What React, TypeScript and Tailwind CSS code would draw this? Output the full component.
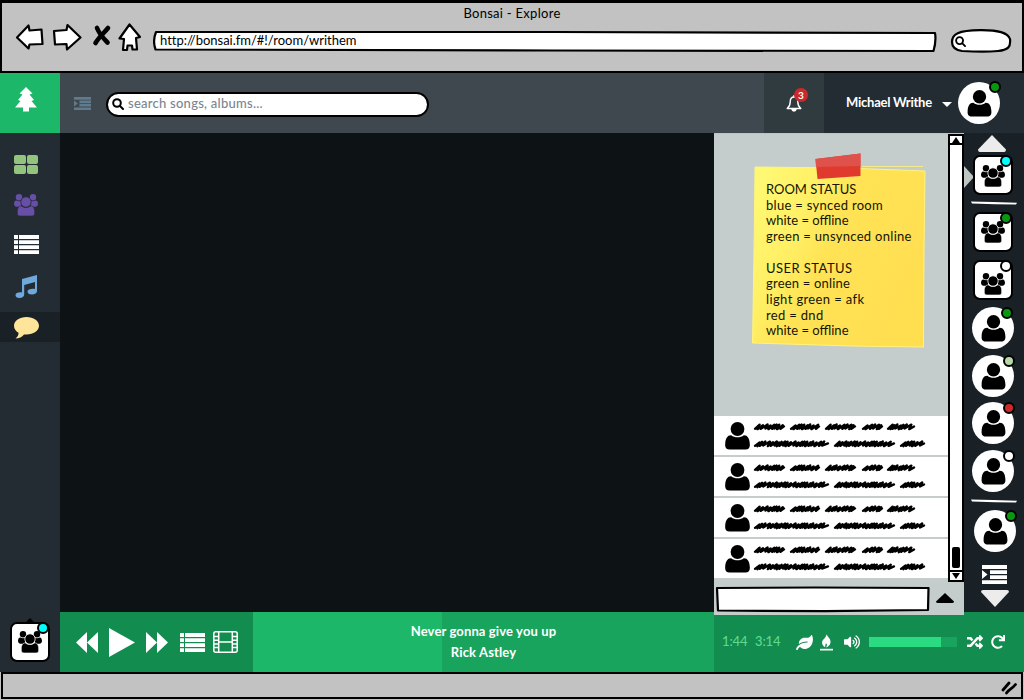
import React from "react";
import { FaLeaf, FaRandom, FaRedo, FaVolumeUp } from "react-icons/fa";

const font = "font-['Lato','Open_Sans',sans-serif]";

function GroupIcon({ className, gap }: { className: string; gap: string }) {
  return (
    <svg viewBox="0 0 24 22" className={`shrink-0 ${className}`} fill="currentColor">
      <circle cx="5" cy="3.2" r="3.2" />
      <circle cx="19" cy="3.2" r="3.2" />
      <path d="M0 10C0 7.800 1 6.200 2.500 6.500 4 7.400 6 7.400 7.500 6.500L7 12.500C3 13.400 0 12.700 0 10ZM24 10C24 7.800 23 6.200 21.500 6.500 20 7.400 18 7.400 16.500 6.500L17 12.500C21 13.400 24 12.700 24 10Z" />
      <path
        d="M3.300 18C3.300 14 5 11.500 7.500 12 10 14 14 14 16.500 12 19 11.500 20.700 14 20.700 18 20.900 21 20 22 18 22H6C4 22 3.100 21 3.300 18Z"
        stroke={gap}
        strokeWidth="0.6"
      />
      <circle cx="12" cy="8" r="5.200" stroke={gap} strokeWidth="0.8" />
    </svg>
  );
}

function PersonIcon({ className }: { className: string }) {
  return (
    <svg viewBox="0 0 25 28" className={`shrink-0 ${className}`} fill="currentColor">
      <circle cx="12.500" cy="7" r="6.900" />
      <path d="M0.200 22C0.300 16.500 2.500 13 6.200 13.200 9.500 16 15.500 16 18.800 13.200 22.500 13 24.700 16.500 24.800 22 25.200 25.500 23.500 27.600 20.500 27.600H4.500C1.500 27.600-0.200 25.500 0.200 22Z" />
    </svg>
  );
}

function ListIcon({ className }: { className: string }) {
  return (
    <svg viewBox="0 0 25 19" className={`shrink-0 ${className}`} fill="currentColor">
      <path d="M0 0H4V4H0ZM5 0H25V4H5ZM0 5.200H4V9H0ZM5 5.200H25V9H5ZM0 10.200H4V14H0ZM5 10.200H25V14H5ZM0 15.300H4V19H0ZM5 15.300H25V19H5Z" />
    </svg>
  );
}

function IndentIcon({ className }: { className: string }) {
  return (
    <svg viewBox="0 0 25 19" className={`shrink-0 ${className}`} fill="currentColor">
      <path d="M0 0H25V4H0ZM8 5.200H25V9H8ZM8 10.200H25V14H8ZM0 15.300H25V19H0ZM0 5L5.500 9.500 0 14Z" />
    </svg>
  );
}

function SearchIcon({ className }: { className: string }) {
  return (
    <svg viewBox="0 0 12 12" className={`shrink-0 ${className}`} fill="none" stroke="#000" strokeWidth="2" strokeLinecap="round">
      <circle cx="5" cy="5" r="3.800" />
      <path d="M8 8L11 11" />
    </svg>
  );
}

function Dot({ className }: { className: string }) {
  return <span className={`absolute size-[12px] rounded-full border-2 border-black ${className}`} />;
}

function RoomTile({ dot, className, icon }: { dot: string; className: string; icon: string }) {
  return (
    <div className={`relative flex size-[40px] shrink-0 justify-center rounded-[7px] border-2 border-black bg-white text-black ${className}`}>
      <GroupIcon className={`h-[22px] w-[24px] ${icon}`} gap="#fff" />
      <Dot className={`-top-[2px] -right-[1px] ${dot}`} />
    </div>
  );
}

function Avatar({ dot, className }: { dot: string; className: string }) {
  return (
    <div className={`relative flex size-[42px] shrink-0 justify-center rounded-full bg-white pt-[8px] text-black ${className}`}>
      <PersonIcon className="h-[27px] w-[25px]" />
      <Dot className={dot} />
    </div>
  );
}

// Squiggly placeholder words: slanted strokes whose spacing and height vary.
const gaps = [3.4, 4.6, 3, 3.8, 2.2, 2.6, 3.6, 2.4];
const rises = [3, 2.4, 3.2, 2.2, 2.8, 3.1];

function scribble(x: number, w: number, y: number, seed: number) {
  let d = `M${x} ${y + 1.8}`;
  let i = seed;
  let p = x + 1;
  while (p < x + w - 4) {
    const rise = rises[i % rises.length];
    d += `L${p + 3.6} ${y - rise + 0.6}L${p + 1.4} ${y + 2.2 - (i % 3) * 0.3}`;
    p += gaps[i % gaps.length];
    i++;
  }
  return d + `L${x + w} ${y - 0.6}`;
}

const words: [number, number, number][] = [
  [2, 29, 6], [38, 28, 6], [73, 29, 6], [110, 19, 6], [135, 26, 6],
  [2, 73, 23], [82, 59, 23], [148, 23, 23],
];
const scribblePath = words.map(([x, w, y], i) => scribble(x, w, y, i * 3)).join("");

function Message({ className }: { className: string }) {
  return (
    <div className={`flex w-full shrink-0 border-[#c4cccc] bg-white pt-[6px] pl-[11px] text-black ${className}`}>
      <PersonIcon className="h-[28px] w-[25px]" />
      <svg viewBox="0 0 174 30" className="-mt-[1px] ml-[3px] h-[30px] w-[174px] shrink-0" fill="none" stroke="#000" strokeWidth="2.300" strokeLinejoin="round" strokeLinecap="round">
        <path d={scribblePath} />
      </svg>
    </div>
  );
}

function BrowserBar() {
  return (
    <header className="relative h-[73px] shrink-0 border-t-[3px] border-r-2 border-b-2 border-l-2 border-black bg-[#c2c2c2]">
      <p className="h-[21px] text-center text-[13px] leading-[20px] tracking-[0.280px]">Bonsai - Explore</p>
      <div className="flex items-start pl-[13px]">
        <svg viewBox="0 0 130 30" className="-mt-[2px] h-[30px] w-[130px] shrink-0" fill="#fff" stroke="#000" strokeWidth="2.200" strokeLinejoin="round">
          <path d="M2 15.500L13.500 3.500 14.500 8.500 26.500 7.500 27.500 22 14.500 22.500 13.500 26.500Z" />
          <path d="M39 9L51.500 8 52.500 3 65.500 15.500 52 27.500 51.500 22 40 22.500Z" />
          <g fill="none" strokeWidth="4.600" strokeLinecap="round">
            <path d="M82 6C84 11 88 16 92.500 20.500" />
            <path d="M93 6C89 11 84 15 80.500 21" />
          </g>
          <path d="M114.500 2.500L125 15 121 16 122 27.500 117.500 27.500 117 23.500 112.500 23.500 112 28 108 28 109 17 104.500 16.500Z" />
        </svg>
        <div className="relative ml-[8px] flex h-[22px] w-[784px] items-center pt-[5px] pl-[7px]">
          <svg viewBox="0 0 784 24" className="absolute top-[5px] left-0 h-[24px] w-[784px]" fill="#fff" stroke="#000" strokeWidth="2.200" strokeLinejoin="round">
            <path d="M3 3L400 3 782 4C783 10 782 17 780.500 22L400 21.500 2.500 20.500C0.500 15 1 8 3 3Z" />
          </svg>
          <span className="relative mt-[5px] text-[13px] leading-[16px] tracking-[-0.020px] whitespace-pre">http://bonsai.fm/#!/room/writhem</span>
        </div>
        <div className="relative ml-[13px] h-[28px] w-[62px]">
          <svg viewBox="0 0 62 26" className="absolute top-[3px] left-0 h-[26px] w-[62px]" fill="#fff" stroke="#000" strokeWidth="2.200">
            <path d="M2 15C2 7 8 3.500 30 3.200 50 3 58 6 60 12 61 20 58 23 48 24 36 25 22 24.500 12 24 5 23 2 20 2 15Z" />
          </svg>
          <SearchIcon className="absolute top-[12px] left-[5px] size-[11px]" />
        </div>
      </div>
    </header>
  );
}

function SideNav() {
  return (
    <nav className="flex w-[60px] shrink-0 flex-col bg-[#242c33]">
      <div className="flex h-[60px] shrink-0 bg-[#1cb768] pt-[14px] pl-[15px] text-white">
        <svg viewBox="0 0 22 25" className="h-[25px] w-[22px]" fill="currentColor">
          <path d="M11 0L17.500 6.500 14.500 7.500 19 13 16.500 14 22 20.500H14V24.500H8V20.500H0L5.500 14 3 13 7.500 7.500 4.500 6.500Z" />
        </svg>
      </div>
      <div className="flex h-[179px] shrink-0 flex-col pt-[22px]">
        <div className="ml-[14px] grid h-[19px] w-[24px] shrink-0 grid-cols-2 gap-px">
          <i className="rounded-[2px] bg-[#93c47d]" />
          <i className="rounded-[2px] bg-[#93c47d]" />
          <i className="rounded-[2px] bg-[#93c47d]" />
          <i className="rounded-[2px] bg-[#93c47d]" />
        </div>
        <GroupIcon className="mt-[20px] ml-[14px] h-[22px] w-[24px] text-[#674ea7]" gap="#242c33" />
        <ListIcon className="mt-[19px] ml-[14px] h-[19px] w-[25px] text-white" />
        <svg viewBox="0 0 22 23" className="mt-[21px] ml-[15px] h-[23px] w-[22px] shrink-0 text-[#6fa8dc]" fill="currentColor">
          <path d="M7 4L22 0V16C22 18.300 19.800 19.500 17 19.500 14.200 19.500 12.500 18.300 12.500 16.700 12.500 14.500 16 13.500 20 14V7L9.200 10V19.500C9.200 21.500 7.200 23 4.500 23 2 23 0.500 21.800 0.500 20.200 0.500 18 3.500 17 7 17.500Z" />
        </svg>
      </div>
      <div className="flex h-[30px] shrink-0 bg-[#192026] pt-[5px] pl-[14px]">
        <svg viewBox="0 0 25 22" className="h-[22px] w-[25px] text-[#ffe599]" fill="currentColor">
          <path d="M12.500 0C19.400 0 25 3.800 25 8.700S19.400 17.500 12.500 17.500H10C8 20 5 21.500 1.500 21.500 3.500 20 4.800 18 4.500 15.800 1.800 14.200 0 11.700 0 8.700 0 3.800 5.600 0 12.500 0Z" />
        </svg>
      </div>
      <div className="relative mt-auto mb-[10px] ml-[10px]">
        <svg viewBox="0 0 12 6" className="absolute -top-[4px] left-[14px] h-[6px] w-[12px]"><path d="M6 0L12 6H0Z" /></svg>
        <RoomTile dot="bg-[#00ffff]" className="" icon="mt-[7px]" />
      </div>
    </nav>
  );
}

function TopBar() {
  return (
    <div className="flex h-[60px] shrink-0 items-center bg-[#3e484e]">
      <IndentIcon className="ml-[14px] h-[13px] w-[17px] text-[#5f7b8c]" />
      <div className="mt-[2px] ml-[15px] flex h-[25px] w-[323px] items-center rounded-[13px] border-2 border-black bg-white pl-[4px]">
        <SearchIcon className="size-[12px]" />
        <span className="-mt-[2px] ml-[4px] text-[13px] leading-[16px] font-medium tracking-[0.250px] text-[#7c8590]">search songs, albums...</span>
      </div>
      <div className="ml-auto flex h-[60px] w-[60px] items-center justify-center bg-[#303b40]">
        <div className="relative text-white">
          <svg viewBox="0 0 16 17" className="h-[17px] w-[16px]" fill="none" stroke="currentColor" strokeWidth="1.400" strokeLinejoin="round">
            <path d="M8 2C5 2 4.200 4.500 4.200 7 4.200 10.500 3 12 1.200 13.500H14.800C13 12 11.800 10.500 11.800 7 11.800 4.500 11 2 8 2Z" />
            <path d="M6 14.500C6.300 16.500 9.700 16.500 10 14.500Z" fill="currentColor" />
            <path d="M8 0V2" />
          </svg>
          <span className="absolute -top-[7px] left-[8px] flex size-[14px] items-center justify-center rounded-full bg-[#cc2a2a] text-[10px] leading-none font-bold">3</span>
        </div>
      </div>
      <div className="flex h-[60px] w-[200px] items-center bg-[#242c33] pl-[22px] text-white">
        <span className="w-[86px] text-[13px] font-bold tracking-[-0.240px] whitespace-nowrap">Michael Writhe</span>
        <svg viewBox="0 0 10 5" className="mt-[2px] ml-[10px] h-[5px] w-[10px]" fill="currentColor"><path d="M0 0H10L5 5Z" /></svg>
        <Avatar className="ml-[6px]" dot="-top-[1px] left-[31px] bg-[#0a970f]" />
      </div>
    </div>
  );
}

function StickyNote() {
  return (
    <div className="relative mt-[19px] ml-[38px] h-[196px] w-[175px] shrink-0 pt-[29px] pl-[14px]">
      <svg viewBox="0 0 175 196" className="absolute inset-0 h-[196px] w-[175px]">
        <defs>
          <linearGradient id="paper" x1="0" y1="0.200" x2="1" y2="0.700">
            <stop offset="0" stopColor="#fff872" />
            <stop offset="0.250" stopColor="#fff066" />
            <stop offset="0.450" stopColor="#ffe355" />
            <stop offset="1" stopColor="#ffde50" />
          </linearGradient>
        </defs>
        <path d="M3 14L95 15 173 18 172 100 171.500 194 100 193 0.500 190 2 100Z" fill="url(#paper)" stroke="#fff47c" strokeWidth="1" />
        <path d="M110 13.500H171" stroke="#f6e98a" strokeWidth="1" />
        <path d="M63.500 6L108.500 0.500 108.500 23 65.500 26Z" fill="#df3a2d" />
        <path d="M63.500 6L108.500 0.500 108.500 13 64 14Z" fill="#df524c" />
      </svg>
      <div className="relative text-[13px] leading-[15.700px] whitespace-nowrap text-[#151500]">
        <p className="tracking-[0]">ROOM STATUS</p>
        <p className="tracking-[0.300px]">blue = synced room</p>
        <p className="tracking-[0]">white = offline</p>
        <p className="tracking-[0.300px]">green = unsynced online</p>
        <p>&nbsp;</p>
        <p className="tracking-[0.450px]">USER STATUS</p>
        <p className="tracking-[0.200px]">green = online</p>
        <p className="tracking-[0.380px]">light green = afk</p>
        <p className="tracking-[0.320px]">red = dnd</p>
        <p className="tracking-[0]">white = offline</p>
      </div>
    </div>
  );
}

function Chat() {
  return (
    <aside className="relative z-10 mt-px -mb-[3px] flex w-[250px] shrink-0 flex-col bg-[#c4cccc]">
      <div className="flex h-[448px] shrink-0">
        <div className="flex w-[234px] flex-col">
          <StickyNote />
          <div className="mt-[67px] flex flex-col">
            <Message className="h-[41px] border-b-2" />
            <Message className="h-[41px] border-b-2" />
            <Message className="h-[41px] border-b-2" />
            <Message className="h-[39px]" />
          </div>
        </div>
        <div className="flex w-[16px] flex-col border-r-[2px] border-l-2 border-black bg-white">
          <div className="flex h-[11px] shrink-0 items-center justify-center border-y-2 border-black">
            <svg viewBox="0 0 8 6" className="h-[6px] w-[8px]"><path d="M4 0L8 6H0Z" /></svg>
          </div>
          <div className="mt-[402px] ml-[2px] h-[21px] w-[8px] shrink-0 rounded-[2px] bg-black" />
          <div className="mt-[2px] flex h-[12px] shrink-0 items-center justify-center border-y-2 border-black">
            <svg viewBox="0 0 8 6" className="h-[6px] w-[8px]"><path d="M0 0H8L4 6Z" /></svg>
          </div>
        </div>
      </div>
      <div className="flex pt-[3px] pl-[1px]">
        <svg viewBox="0 0 216 28" className="h-[28px] w-[216px]" fill="#fff" stroke="#000" strokeWidth="2.200" strokeLinejoin="round">
          <path d="M2 3L100 2.500 213.500 3 213 25 110 26.200 3 25.500Z" />
        </svg>
        <svg viewBox="0 0 18 10" className="mt-[8px] ml-[5px] h-[10px] w-[18px]"><path d="M9 0L18 8.500Q18 10 16 10H2Q0 10 0 8.500Z" /></svg>
      </div>
    </aside>
  );
}

function Divider({ className }: { className: string }) {
  return (
    <svg viewBox="0 0 46 4" className={`h-[4px] w-[46px] shrink-0 ${className}`} fill="#fff">
      <path d="M0 0.600L22 0.900 46 1.800 45 3.500 24 3.200 1 2.600Z" />
    </svg>
  );
}

function Rail() {
  return (
    <aside className="flex w-[60px] shrink-0 flex-col items-start bg-[#192026] pt-[2px]">
      <svg viewBox="0 0 28 17" className="ml-[14px] h-[17px] w-[28px] shrink-0" fill="#ececec"><path d="M14 0L28 14.500Q28 17 26 17H2Q0 17 0 14.500Z" /></svg>
      <div className="relative mt-[3px] pl-[9px]">
        <svg viewBox="0 0 10 22" className="absolute top-[11px] left-0 h-[22px] w-[10px]" fill="#bfc5c3"><path d="M0 0L10 11 0 22Z" /></svg>
        <RoomTile className="" icon="mt-[8px]" dot="bg-[#00ffff]" />
      </div>
      <Divider className="mt-[6px] ml-[7px]" />
      <RoomTile className="mt-[7px] ml-[9px]" icon="mt-[7px]" dot="bg-[#0a970f]" />
      <RoomTile className="mt-[8px] ml-[9px]" icon="mt-[11px]" dot="bg-white" />
      <Avatar className="mt-[7px] ml-[8px]" dot="top-0 left-[29px] bg-[#0a970f]" />
      <Avatar className="mt-[6px] ml-[8px]" dot="top-0 left-[31px] bg-[#b6d7a8]" />
      <Avatar className="mt-[5px] ml-[8px]" dot="top-0 left-[31px] bg-[#cc2a2a]" />
      <Avatar className="mt-[6px] ml-[8px]" dot="top-0 left-[31px] bg-white" />
      <Divider className="mt-[7px] ml-[7px]" />
      <Avatar className="mt-[7px] ml-[10px]" dot="top-0 left-[31px] bg-[#0a970f]" />
      <IndentIcon className="mt-[13px] ml-[18px] h-[19px] w-[25px] text-white" />
      <svg viewBox="0 0 28 17" className="mt-[6px] ml-[17px] h-[17px] w-[28px] shrink-0" fill="#ececec"><path d="M2 0H26Q28 0 28 2L14 17 0 2Q0 0 2 0Z" /></svg>
    </aside>
  );
}

function Player() {
  return (
    <div className="flex h-[60px] shrink-0 bg-[#128c4f] text-white">
      <div className="flex w-[193px] shrink-0 items-center pl-[16px]">
        <svg viewBox="0 0 22 21" className="h-[21px] w-[22px]" fill="currentColor"><path d="M0 10.500L11 0V21ZM11 10.500L22 0V21Z" /></svg>
        <svg viewBox="0 0 26 29" className="ml-[11px] h-[29px] w-[26px]" fill="currentColor"><path d="M0 0L26 14.500 0 29Z" /></svg>
        <svg viewBox="0 0 22 21" className="ml-[11px] h-[21px] w-[22px]" fill="currentColor"><path d="M0 0L11 10.500 0 21ZM11 0L22 10.500 11 21Z" /></svg>
        <ListIcon className="ml-[12px] h-[19px] w-[25px]" />
        <svg viewBox="0 0 25 22" className="ml-[8px] h-[22px] w-[25px]" fill="none" stroke="currentColor" strokeWidth="1.500">
          <rect x="0.800" y="0.800" width="23.400" height="20.400" rx="2" />
          <path d="M5.700 1V21M19.300 1V21M5.700 11H19.300" />
          <path d="M1 5.500H5M1 9.200H5M1 12.900H5M1 16.600H5M20 5.500H24M20 9.200H24M20 12.900H24M20 16.600H24" />
        </svg>
      </div>
      <div className="flex w-[461px] shrink-0 flex-col items-center bg-linear-to-r from-[#1cb768] from-[189px] to-[#18a45d] to-[189px] pt-[9px] text-[13px] leading-[21px] font-bold">
        <p className="tracking-[0.130px]">Never gonna give you up</p>
        <p className="tracking-[0.130px]">Rick Astley</p>
      </div>
      <div className="flex flex-1 items-center">
        <span className="-mt-[2px] ml-[8px] w-[33px] text-[13px] leading-none font-medium tracking-[-0.100px] text-[#60d98c]">1:44</span>
        <span className="-mt-[2px] w-[41px] text-[13px] leading-none font-medium tracking-[-0.100px] text-[#60d98c]">3:14</span>
        <FaLeaf className="h-[15px] w-[17px] shrink-0" />
        <svg viewBox="0 0 13 17" className="ml-[7px] h-[17px] w-[13px] shrink-0" fill="currentColor">
          <path d="M6.500 0C7 2.500 11 4.500 10.500 8.500 10.200 11 8.500 12.500 6 13.500 7.500 11 7 10 6 9.200 5.600 10.500 5 11 5.300 13.200 2.800 12 1.600 10 2.200 7.500 3 5 6.500 3.500 6.500 0Z" />
          <path d="M0 14.800H13V16.500H0Z" />
        </svg>
        <FaVolumeUp className="ml-[11px] h-[16px] w-[16px] shrink-0" />
        <div className="ml-[9px] h-[10px] w-[88px] shrink-0 bg-[#18a45d]">
          <div className="h-full w-[72px] bg-[#2bdb81]" />
        </div>
        <FaRandom className="ml-[10px] size-[16px] shrink-0" />
        <FaRedo className="ml-[8px] size-[14px] shrink-0" />
      </div>
    </div>
  );
}

export default function App() {
  return (
    <div className={`flex h-[700px] w-[1024px] flex-col overflow-hidden bg-[#c2c2c2] text-black ${font}`}>
      <BrowserBar />
      <div className="flex h-[599px] shrink-0">
        <SideNav />
        <div className="flex w-[964px] flex-col">
          <TopBar />
          <div className="flex h-[479px] shrink-0">
            <main className="flex-1 bg-[#0d1214]" />
            <Chat />
            <Rail />
          </div>
          <Player />
        </div>
      </div>
      <footer className="ml-[1px] flex h-[27px] w-[1022px] shrink-0 items-center justify-end border-t-2 border-r-2 border-b-2 border-l-2 border-black bg-[#c2c2c2] pr-[4px] pt-[4px]">
        <svg viewBox="0 0 16 14" className="h-[14px] w-[16px]" fill="none" stroke="#000" strokeWidth="2.800" strokeLinecap="round"><path d="M2 9L8 2M5.500 12C8 8 11 8 14.500 3.500" /></svg>
      </footer>
    </div>
  );
}
